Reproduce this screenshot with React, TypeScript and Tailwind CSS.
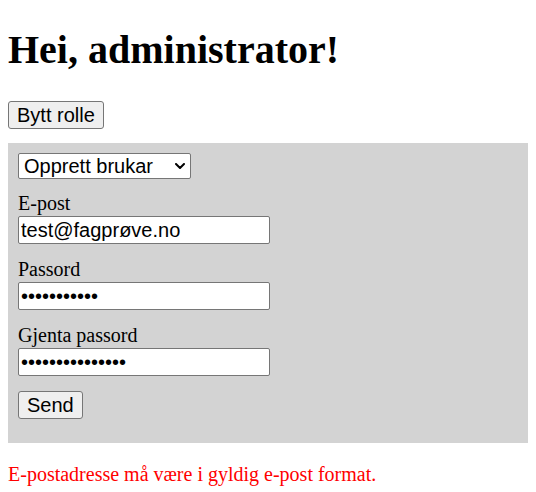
import { useState } from "react";

const ROLES = ["Opprett brukar", "Endre brukar", "Slett brukar"];

const serif = "font-['Liberation_Serif','Times_New_Roman',serif]";
const sans = "font-['Liberation_Sans',Arial,sans-serif]";

const btn = `${sans} block h-[28px] px-[8px] text-[20px] leading-[23px] text-black bg-[#efefef] border border-[#767676] rounded-[3px]`;
const input = `${sans} block w-[252px] h-[28px] px-[2px] text-[20px] leading-[23px] text-black bg-white border border-[#767676] rounded-[2px] outline-none`;

function Field({ label, type, value, className }: { label: string; type: string; value: string; className: string }) {
  return (
    <div className={className}>
      <label className="block text-[20px] leading-[23px]">{label}</label>
      <input type={type} defaultValue={value} className={`${input} mt-[1px]`} />
    </div>
  );
}

export default function App() {
  const [role, setRole] = useState(ROLES[0]);

  return (
    <div className={`${serif} p-2 text-black bg-white min-h-screen`}>
      <h1 className="mt-[19px] text-[40px] leading-[46px] font-bold">Hei, administrator!</h1>

      <button className={`${btn} mt-[28px]`}>Bytt rolle</button>

      <form
        className="mt-[14px] bg-[#d3d3d3] px-[10px] pt-[10px] pb-[24px]"
        onSubmit={(e) => e.preventDefault()}
      >
        <div className="relative w-[173px]">
          <select
            value={role}
            onChange={(e) => setRole(e.target.value)}
            className={`${sans} block w-[173px] h-[26px] pl-[5px] pr-[24px] text-[20px] leading-[23px] bg-white border border-[#767676] rounded-[2px] appearance-none outline-none`}
          >
            {ROLES.map((r) => (
              <option key={r}>{r}</option>
            ))}
          </select>
          {/* dropdown chevron */}
          <svg
            className="absolute right-[6px] top-[10px] pointer-events-none"
            width="10"
            height="6"
            viewBox="0 0 10 6"
            fill="none"
          >
            <path d="M1 1l4 4 4-4" stroke="#000" strokeWidth="2" strokeLinecap="round" strokeLinejoin="round" />
          </svg>
        </div>

        <Field className="mt-[13px]" label="E-post" type="email" value="test@fagprøve.no" />
        <Field className="mt-[14px]" label="Passord" type="password" value="passord1234" />
        <Field className="mt-[14px]" label="Gjenta passord" type="password" value="passord12345678" />

        <button type="submit" className={`${btn} mt-[15px]`}>
          Send
        </button>
      </form>

      <p className="mt-[20px] text-[20px] leading-[23px] text-[#ff0000]">
        E-postadresse må være i gyldig e-post format.
      </p>
    </div>
  );
}
